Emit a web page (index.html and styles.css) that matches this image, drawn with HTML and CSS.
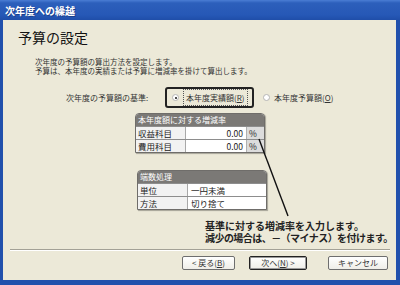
FILE: index.html
```html
<!DOCTYPE html>
<html lang="ja">
<head>
  <meta charset="UTF-8" />
  <title>次年度への繰越</title>
  <link rel="stylesheet" href="styles.css">
</head>
<body>
  <div class="window">
    <div class="titlebar">次年度への繰越</div>
    <div class="client">
      <h1 class="heading">予算の設定</h1>
      <p class="desc">次年度の予算額の算出方法を設定します。<br>予算は、本年度の実績または予算に増減率を掛けて算出します。</p>

      <div class="basis">
        <span class="basis-label">次年度の予算額の基準:</span>
        <div class="radio-box">
          <label class="radio"><span class="dot checked"></span><span class="focus">本年度実績額(<u>R</u>)</span></label>
        </div>
        <label class="radio"><span class="dot"></span><span>本年度予算額(<u>O</u>)</span></label>
      </div>

      <div class="panel rate">
        <div class="panel-head">本年度額に対する増減率</div>
        <div class="panel-row">
          <span class="cell-label">収益科目</span>
          <span class="cell-value num">0.00</span>
          <span class="cell-unit">%</span>
        </div>
        <div class="panel-row">
          <span class="cell-label">費用科目</span>
          <span class="cell-value num">0.00</span>
          <span class="cell-unit">%</span>
        </div>
      </div>

      <div class="panel rounding">
        <div class="panel-head">端数処理</div>
        <div class="panel-row">
          <span class="cell-label">単位</span>
          <span class="cell-value">一円未満</span>
        </div>
        <div class="panel-row">
          <span class="cell-label">方法</span>
          <span class="cell-value">切り捨て</span>
        </div>
      </div>

      <p class="note">基準に対する増減率を入力します。<br><span class="tight">減少の場合は、－（マイナス）を付けます。</span></p>

      <svg class="pointer" width="40" height="90" viewBox="0 0 40 90">
        <line x1="2" y1="2" x2="31" y2="79" stroke="#111" stroke-width="1.4" />
      </svg>

      <div class="separator"></div>

      <div class="buttons">
        <button class="btn back">&lt; 戻る(<u>B</u>)</button>
        <button class="btn next">次へ(<u>N</u>) &gt;</button>
        <button class="btn cancel">キャンセル</button>
      </div>
    </div>
  </div>
</body>
</html>
```

FILE: styles.css
```css
body {
  margin: 0;
  font-family: "Noto Sans CJK JP", "Noto Sans", sans-serif;
  color: #222;
}
.window {
  width: 400px;
  height: 285px;
  background: #2150ac;
  display: flex;
  flex-direction: column;
  overflow: hidden;
}
.titlebar {
  height: 20px;
  background: linear-gradient(#4a7dd4 0, #2c5fbb 3px, #2658b6 15px, #1f4ea9 20px);
  color: #fff;
  font-size: 10px;
  font-weight: bold;
  line-height: 21px;
  padding-left: 5px;
  text-shadow: 1px 1px 0 #1a3f8c;
}
.client {
  position: relative;
  flex: 1;
  margin: 0 4px 5px 3px;
  background: #ece9d8;
  display: flex;
  flex-direction: column;
}
.heading {
  margin: 9px 0 0 15px;
  font-size: 14px;
  line-height: 16px;
  font-weight: normal;
  color: #111;
}
.desc {
  margin: 13px 0 0 32px;
  font-size: 7.5px;
  line-height: 8.5px;
  color: #333;
}
.basis {
  display: flex;
  align-items: center;
  margin: 12px 0 0 63px;
  height: 21px;
  font-size: 8px;
  color: #333;
}
.basis-label {
  width: 99px;
}
.radio-box {
  box-sizing: border-box;
  width: 89px;
  height: 21px;
  border: 2px solid #222;
  border-radius: 3px;
  display: flex;
  align-items: center;
  padding-left: 5px;
  margin-right: 9px;
}
.radio {
  display: flex;
  align-items: center;
  gap: 4px;
}
.dot {
  box-sizing: border-box;
  width: 7px;
  height: 7px;
  border-radius: 50%;
  border: 1px solid #b5b5b5;
  background: #fff;
  position: relative;
}
.dot.checked::after {
  content: "";
  position: absolute;
  left: 1.5px;
  top: 1.5px;
  width: 2px;
  height: 2px;
  border-radius: 50%;
  background: #111;
}
.focus {
  border: 1px dotted #555;
  padding: 3px 2px;
  line-height: 9px;
}
.panel {
  box-sizing: border-box;
  border: 1px solid #6f6d6a;
  border-radius: 4px 4px 0 0;
  background: #fff;
  box-shadow: 1px 1px 1px rgba(0, 0, 0, 0.3);
  overflow: hidden;
}
.rate {
  width: 130px;
  margin: 5px 0 0 132px;
}
.rounding {
  width: 130px;
  margin: 17px 0 0 134px;
}
.panel-head {
  height: 12px;
  background: #7b7976;
  color: #fff;
  font-size: 8px;
  line-height: 12px;
  padding-left: 2px;
}
.panel-row {
  display: grid;
  height: 12px;
  border-top: 1px solid #8d8d8d;
  font-size: 8.5px;
  line-height: 12px;
  color: #222;
}
.rate .panel-row {
  grid-template-columns: 50px 60px 1fr;
}
.rounding .panel-row {
  grid-template-columns: 50px 1fr;
}
.cell-label {
  background: #f2f2f2;
  border-right: 1px solid #a8a8a8;
  padding-left: 2px;
}
.cell-value {
  padding-left: 3px;
}
.cell-value.num {
  text-align: right;
  padding-right: 3px;
}
.cell-unit {
  background: #dcdcdc;
  border-left: 1px solid #b0b0b0;
  padding-left: 2px;
}
.note {
  margin: 10px 0 0 202px;
  font-size: 10px;
  line-height: 11.5px;
  font-weight: bold;
  color: #222;
  white-space: nowrap;
}
.tight {
  letter-spacing: -0.55px;
}
.pointer {
  position: absolute;
  left: 254px;
  top: 117px;
}
.separator {
  margin: 6px 6px 0 7px;
  border-top: 1px solid #a3a196;
  border-bottom: 1px solid #fff;
}
.buttons {
  display: flex;
  margin: 5px 0 0 179px;
}
.btn {
  box-sizing: border-box;
  height: 14px;
  padding: 0;
  font-family: inherit;
  font-size: 8px;
  line-height: 12px;
  color: #333;
  background: linear-gradient(#ffffff, #efeee8);
  border: 1px solid #6e6e6e;
  border-radius: 2px;
}
.back {
  width: 53px;
}
.next {
  width: 58px;
  margin-left: 14px;
  border-color: #222;
  box-shadow: inset 0 0 0 1px #9a9a9a;
}
.cancel {
  width: 60px;
  margin-left: 21px;
}
```
